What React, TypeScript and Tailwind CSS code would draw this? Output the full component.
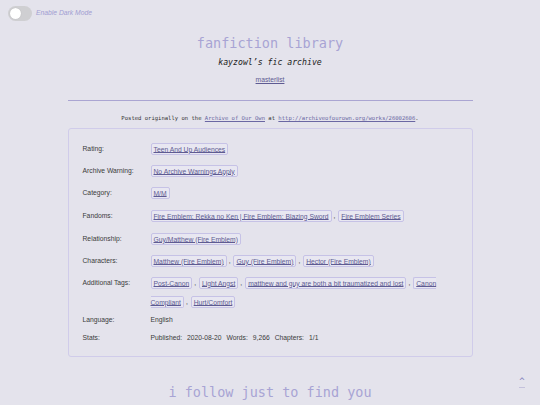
import React from "react";

const sans = { fontFamily: '"Liberation Sans", Arial, sans-serif' };
const mono = { fontFamily: '"DejaVu Sans Mono", monospace' };

function Tag({ children }: { children: React.ReactNode }) {
  return (
    <span className="border border-[#c6c2e6] bg-[#e8e7f1] rounded-[2px] px-[2px] py-[1.5px] text-[#5e5b92] underline decoration-[0.5px] underline-offset-[1px]">
      {children}
    </span>
  );
}

function Tags({ items }: { items: string[] }) {
  return (
    <>
      {items.map((t, i) => (
        <React.Fragment key={i}>
          <Tag>{t}</Tag>
          {i < items.length - 1 && <span className="ml-[2px] mr-[1px]">,</span>}{" "}
        </React.Fragment>
      ))}
    </>
  );
}

function Row({ label, children, mt, lh = "leading-[19px]" }: { label: string; children: React.ReactNode; mt: string; lh?: string }) {
  return (
    <div className={`grid grid-cols-[68px_1fr] ${lh} ${mt}`}>
      <div className="text-[#3b3b3b]">{label}</div>
      <div className="text-[#3b3b3b]">{children}</div>
    </div>
  );
}

export default function App() {
  return (
    <div className="relative h-[405px] w-[540px] overflow-hidden bg-[#e4e3ec]" style={sans}>
      <div className="flex items-center gap-[4px] pl-[8px] pt-[6px] h-[21px]">
        <div className="relative w-[24px] h-[15px] rounded-full bg-[#cfcfd2]">
          <div className="absolute left-[2px] top-[2px] w-[11px] h-[11px] rounded-full bg-white shadow-[0_0_1px_rgba(0,0,0,0.2)]" />
        </div>
        <span className="text-[6.75px] italic text-[#a19dd2]">Enable Dark Mode</span>
      </div>

      <div className="mt-[12px] h-[20px] leading-[20px] text-center text-[13.5px] text-[#a8a4d4]" style={mono}>
        fanfiction library
      </div>
      <div className="mt-[2px] h-[14px] leading-[14px] text-center text-[8.2px] italic text-[#222]" style={mono}>
        kayzowl’s fic archive
      </div>
      <div className="mt-[5px] h-[12px] leading-[12px] text-center text-[6.75px]">
        <span className="text-[#5e5b92] underline">masterlist</span>
      </div>

      <div className="mt-[14px] mx-auto w-[405px] h-px bg-[#aaa5d2]" />

      <div className="mt-[12px] h-[10px] leading-[10px] text-center text-[5.55px] text-[#333]" style={mono}>
        Posted originally on the <span className="text-[#6a67a3] underline">Archive of Our Own</span> at{" "}
        <span className="text-[#6a67a3] underline">http://archiveofourown.org/works/26002606</span>.
      </div>

      <div className="mt-[5px] mx-auto w-[405px] h-[229px] border border-[#d0ccea] rounded-[3px] px-[14px] pt-[10px] text-[6.75px]">
        <Row label="Rating:" mt="mt-0">
          <Tags items={["Teen And Up Audiences"]} />
        </Row>
        <Row label="Archive Warning:" mt="mt-[3px]">
          <Tags items={["No Archive Warnings Apply"]} />
        </Row>
        <Row label="Category:" mt="mt-[3px]">
          <Tags items={["M/M"]} />
        </Row>
        <Row label="Fandoms:" mt="mt-[4px]">
          <Tags items={["Fire Emblem: Rekka no Ken | Fire Emblem: Blazing Sword", "Fire Emblem Series"]} />
        </Row>
        <Row label="Relationship:" mt="mt-[4px]">
          <Tags items={["Guy/Matthew (Fire Emblem)"]} />
        </Row>
        <Row label="Characters:" mt="mt-[3px]">
          <Tags items={["Matthew (Fire Emblem)", "Guy (Fire Emblem)", "Hector (Fire Emblem)"]} />
        </Row>
        <Row label="Additional Tags:" mt="mt-[3px]">
          <Tags
            items={[
              "Post-Canon",
              "Light Angst",
              "matthew and guy are both a bit traumatized and lost",
              "Canon Compliant",
              "Hurt/Comfort",
            ]}
          />
        </Row>
        <Row label="Language:" mt="mt-0" lh="leading-[18px]">
          English
        </Row>
        <Row label="Stats:" mt="mt-0" lh="leading-[18px]">
          <span>Published:</span>
          <span className="ml-[5px]">2020-08-20</span>
          <span className="ml-[5px]">Words:</span>
          <span className="ml-[5px]">9,266</span>
          <span className="ml-[5px]">Chapters:</span>
          <span className="ml-[5px]">1/1</span>
        </Row>
      </div>

      <div className="mt-[25px] text-center text-[13.5px] leading-[20px] text-[#a8a4d4]" style={mono}>
        i follow just to find you
      </div>

      <div className="absolute left-[517px] top-[377px] flex flex-col items-center w-[10px]">
        <span className="text-[9px] leading-[9px] text-[#7f7bba]" style={mono}>^</span>
        <span className="mt-[1px] w-[6px] h-[1px] bg-[#c4c1dc]" />
      </div>
    </div>
  );
}
